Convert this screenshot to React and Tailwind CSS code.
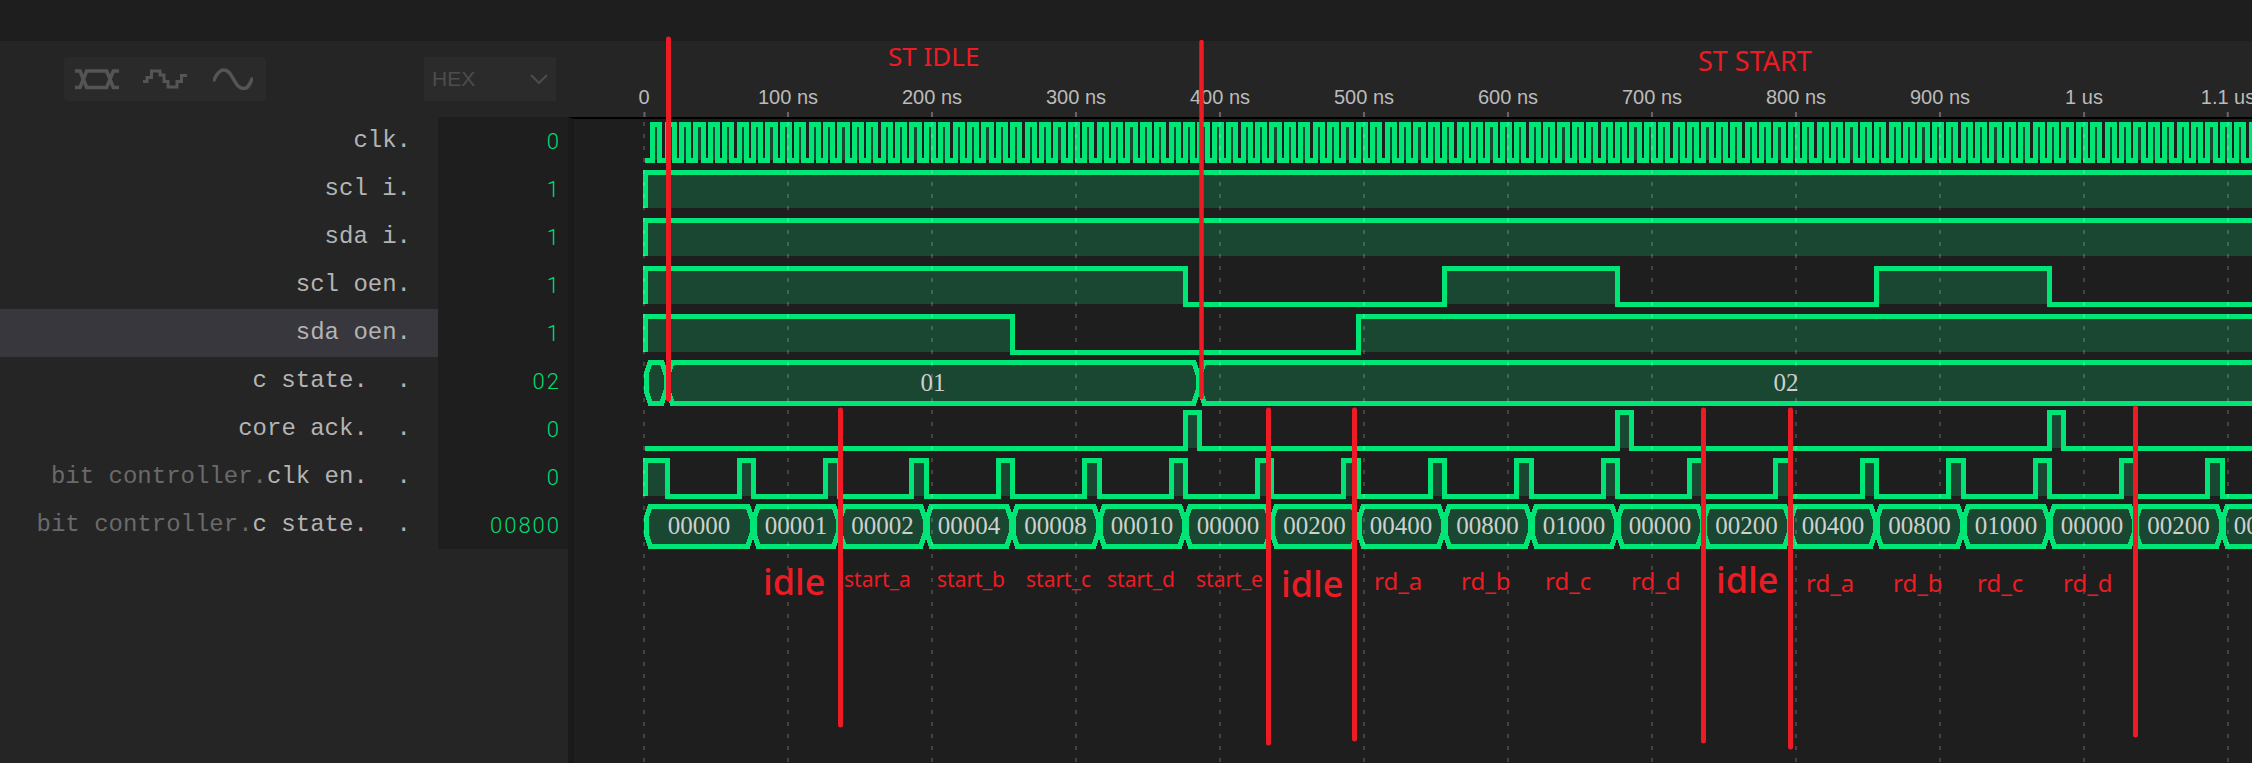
const GREEN = "#00e676";
const FILL = "#1a4731";
const X0 = 645;
const SCALE = 1.44;
const END_X = 2260;

const x = (t) => Math.round(X0 + SCALE * t);

const clkEdges = [];
for (let t = 5; x(t) < END_X; t += 5) clkEdges.push(t);

const enEdges = [15];
for (let t = 65; x(t) < END_X; t += 60) enEdges.push(t, t + 10);

// top is the y of the row in page pixels
const bitRows = [
  { top: 117, start: 0, edges: clkEdges },
  { top: 165, start: 1, edges: [] },
  { top: 213, start: 1, edges: [] },
  { top: 261, start: 1, edges: [375, 555, 675, 855, 975] },
  { top: 309, start: 1, edges: [255, 495] },
  { top: 405, start: 0, edges: [375, 385, 675, 685, 975, 985] },
  { top: 453, start: 1, edges: enEdges },
];

const bitValues = [
  "00000", "00001", "00002", "00004", "00008", "00010", "00000", "00200", "00400",
  "00800", "01000", "00000", "00200", "00400", "00800", "01000", "00000", "00200", "00400",
];

const busRows = [
  {
    y0: 362,
    y1: 403,
    base: 391,
    segs: [
      { from: 0, to: 15, text: "" },
      { from: 15, to: 385, text: "01" },
      { from: 385, to: 1200, text: "02" },
    ],
  },
  {
    y0: 506,
    y1: 546,
    base: 534,
    segs: bitValues.map((text, i) => ({
      from: i === 0 ? 0 : 75 + 60 * (i - 1),
      to: 75 + 60 * i,
      text,
    })),
  },
];

const signals = [
  { name: "clk.", value: "0" },
  { name: "scl i.", value: "1" },
  { name: "sda i.", value: "1" },
  { name: "scl oen.", value: "1" },
  { name: "sda oen.", value: "1", selected: true },
  { name: "c state.  .", value: "02" },
  { name: "core ack.  .", value: "0" },
  { prefix: "bit controller.", name: "clk en.  .", value: "0" },
  { prefix: "bit controller.", name: "c state.  .", value: "00800" },
];

const ticks = ["0", "100 ns", "200 ns", "300 ns", "400 ns", "500 ns", "600 ns", "700 ns", "800 ns", "900 ns", "1 us", "1.1 us"];

const redLines = [
  { x: 668.5, y1: 39, y2: 399, w: 5 },
  { x: 1201.5, y1: 42, y2: 397, w: 4.5 },
  { x: 840.5, y1: 410, y2: 725, w: 5 },
  { x: 1268.5, y1: 410, y2: 743, w: 5 },
  { x: 1354.5, y1: 410, y2: 739, w: 5 },
  { x: 1703.5, y1: 410, y2: 741, w: 5 },
  { x: 1790.5, y1: 410, y2: 747, w: 5 },
  { x: 2135.5, y1: 408, y2: 735, w: 5 },
];

const notes = [
  { text: "ST IDLE", cls: "left-[888px] top-[43px] text-[26px]" },
  { text: "ST START", cls: "left-[1698px] top-[47px] text-[27px]" },
  { text: "idle", cls: "left-[763px] top-[564px] text-[36px] font-medium" },
  { text: "idle", cls: "left-[1281px] top-[566px] text-[36px] font-medium" },
  { text: "idle", cls: "left-[1716px] top-[562px] text-[36px] font-medium" },
  { text: "start_a", cls: "left-[844px] top-[569px] text-[21px]" },
  { text: "start_b", cls: "left-[937px] top-[569px] text-[21px]" },
  { text: "start_c", cls: "left-[1026px] top-[569px] text-[21px]" },
  { text: "start_d", cls: "left-[1107px] top-[569px] text-[21px]" },
  { text: "start_e", cls: "left-[1196px] top-[569px] text-[21px]" },
  { text: "rd_a", cls: "left-[1374px] top-[569px] text-[24px]" },
  { text: "rd_b", cls: "left-[1461px] top-[569px] text-[24px]" },
  { text: "rd_c", cls: "left-[1545px] top-[569px] text-[24px]" },
  { text: "rd_d", cls: "left-[1631px] top-[569px] text-[24px]" },
  { text: "rd_a", cls: "left-[1806px] top-[571px] text-[24px]" },
  { text: "rd_b", cls: "left-[1893px] top-[571px] text-[24px]" },
  { text: "rd_c", cls: "left-[1977px] top-[571px] text-[24px]" },
  { text: "rd_d", cls: "left-[2063px] top-[571px] text-[24px]" },
];

const BitWave = ({ top, start, edges }) => {
  const hi = top + 7;
  const lo = top + 43;
  const xs = [X0, ...edges.map(x), END_X];
  let level = start;
  let d = `M${X0} ${lo} V${level ? hi : lo}`;
  const rects = [];
  for (let i = 0; i < xs.length - 1; i++) {
    const a = xs[i];
    const b = xs[i + 1];
    if (level) rects.push(<rect key={a} x={a} y={hi} width={b - a} height={lo - hi} fill={FILL} />);
    d += ` H${b}`;
    level = level ? 0 : 1;
    if (i < xs.length - 2) d += ` V${level ? hi : lo}`;
  }
  return (
    <g>
      {rects}
      <path d={d} fill="none" stroke={GREEN} strokeWidth="5" strokeLinejoin="miter" />
    </g>
  );
};

const busPoints = (a, b, y0, y1) =>
  [
    [a + 5, y0],
    [b - 5, y0],
    [b - 1, y0 + 13],
    [b - 1, y1 - 13],
    [b - 5, y1],
    [a + 5, y1],
    [a + 1, y1 - 13],
    [a + 1, y0 + 13],
  ]
    .map((p) => p.join(","))
    .join(" ");

const Grid = () =>
  ticks.map((_, i) => (
    <line
      key={i}
      x1={644 + 144 * i}
      x2={644 + 144 * i}
      y1="119"
      y2="763"
      stroke="#ffffff"
      strokeOpacity="0.17"
      strokeWidth="2"
      strokeDasharray="4 8"
      strokeDashoffset="-3"
    />
  ));

const Waves = () => (
  <svg viewBox="574 119 1678 644" className="block h-full w-full" shapeRendering="crispEdges">
    {bitRows.map((r) => (
      <BitWave key={r.top} {...r} />
    ))}
    {busRows.map((bus) =>
      bus.segs.map((s) => (
        <polygon
          key={bus.y0 + "-" + s.from}
          points={busPoints(x(s.from), x(s.to), bus.y0, bus.y1)}
          fill={FILL}
          stroke={GREEN}
          strokeWidth="5"
        />
      ))
    )}
    <Grid />
    {busRows.map((bus) =>
      bus.segs.map((s) =>
        s.text ? (
          <text
            key={bus.y0 + "t" + s.from}
            x={(x(s.from) + x(s.to)) / 2}
            y={bus.base}
            textAnchor="middle"
            fill="#cfcfcf"
            fontSize="25"
            fontFamily="'Liberation Serif', serif"
          >
            {s.text}
          </text>
        ) : null
      )
    )}
  </svg>
);

const BusIcon = () => (
  <svg width="44" height="21" viewBox="0 0 44 21" fill="none" stroke="#555555" strokeWidth="3.5">
    <path d="M0 2 H5 L11.7 18.5 H31.7 L38.3 2 H44" />
    <path d="M0 18.5 H5 L11.7 2 H31.7 L38.3 18.5 H44" />
  </svg>
);

const StepIcon = () => (
  <svg width="44" height="20" viewBox="0 0 44 20" fill="none" stroke="#555555" strokeWidth="3">
    <path d="M0 12.5 H4 V8.5 H8.5 V2 H17 V6 H21 V12.5 H25 V18 H34 V12.5 H38.5 V6.5 H44" />
  </svg>
);

const SineIcon = () => (
  <svg width="40" height="22" viewBox="0 0 40 22" fill="none" stroke="#555555" strokeWidth="3.5" strokeLinecap="round">
    <path d="M1 12 C4 5 7 2 11 2 C16 2 18 7 21 12 C24 17 26 20.5 31 20.5 C35 20.5 37 16 39 11" />
  </svg>
);

export default function App() {
  return (
    <div className="relative flex h-[763px] w-full flex-col overflow-hidden bg-[#252525]">
      <div className="h-[41px] bg-[#1e1e1e]" />
      <div className="flex flex-1">
        {/* signal names and values */}
        <div className="flex w-[568px] flex-col">
          <div className="flex h-[76px] items-center pl-[64px]">
            <div className="flex h-[44px] w-[202px] items-center rounded bg-[#2a2a2a] pl-[11px]">
              <BusIcon />
              <div className="ml-[24px]">
                <StepIcon />
              </div>
              <div className="ml-[26px]">
                <SineIcon />
              </div>
            </div>
            <div className="ml-[158px] flex h-[44px] w-[132px] items-center justify-between bg-[#2b2b2b] pl-[8px] pr-[8px]">
              <span className="font-['Liberation_Sans',sans-serif] text-[21px] text-[#4d4d4d]">HEX</span>
              <svg width="18" height="10" viewBox="0 0 18 10" fill="none" stroke="#4d4d4d" strokeWidth="2">
                <path d="M1 1 L9 9 L17 1" />
              </svg>
            </div>
          </div>
          <div className="flex flex-col">
            {signals.map((s) => (
              <div key={(s.prefix || "") + s.name} className="flex h-[48px]">
                <div
                  className={`flex w-[438px] items-center justify-end whitespace-pre pr-[27px] font-['Liberation_Mono',monospace] text-[24px] text-[#b4b4b4] ${
                    s.selected ? "bg-[#37373d]" : ""
                  }`}
                >
                  {s.prefix && <span className="text-[#6a6a6a]">{s.prefix}</span>}
                  <span>{s.name}</span>
                </div>
                <div className="flex w-[130px] items-center justify-end bg-[#1e1e1e] pr-[7px] font-['Roboto',sans-serif] text-[22px] font-light tracking-[2px] text-[#00dc72] tabular-nums">
                  {s.value}
                </div>
              </div>
            ))}
          </div>
        </div>

        {/* time axis and waves */}
        <div className="flex flex-1 flex-col">
          <div className="relative h-[76px]">
            {ticks.map((t, i) => (
              <div
                key={t}
                className="absolute bottom-0 flex -translate-x-1/2 flex-col items-center"
                style={{ left: 644 + 144 * i - 568 }}
              >
                <span className="mb-[5px] whitespace-nowrap font-['Liberation_Sans',sans-serif] text-[20px] leading-[20px] text-[#bbbbbb]">
                  {t}
                </span>
                <div className="h-[5px] w-[2px] bg-[#666666]" />
              </div>
            ))}
          </div>
          <div className="min-h-0 flex-1 border-l-[6px] border-t-2 border-l-[#1a1a1a] border-t-black bg-[#1e1e1e]">
            <Waves />
          </div>
        </div>
      </div>

      {/* hand-drawn red markup on top of the capture */}
      <svg className="pointer-events-none absolute inset-0" width="2252" height="763" viewBox="0 0 2252 763" fill="none">
        {redLines.map((l) => (
          <line key={l.x} x1={l.x} x2={l.x} y1={l.y1} y2={l.y2} stroke="#ed1c24" strokeWidth={l.w} strokeLinecap="round" />
        ))}
      </svg>
      {notes.map((n) => (
        <span
          key={n.cls}
          className={`absolute whitespace-nowrap font-['Noto_Sans',sans-serif] leading-none text-[#ed1c24] ${n.cls}`}
        >
          {n.text}
        </span>
      ))}
    </div>
  );
}
